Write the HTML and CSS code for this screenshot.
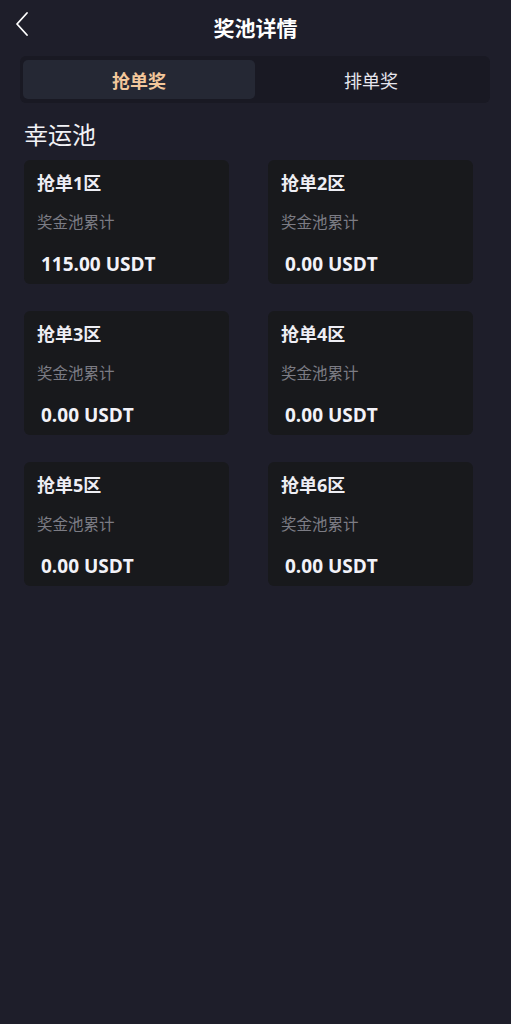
FILE: index.html
```html
<!DOCTYPE html>
<html lang="zh">
<head>
<meta charset="utf-8">
<title>奖池详情</title>
<link rel="stylesheet" href="styles.css">
</head>
<body>
<div class="page">
  <header class="topbar">
    <span class="back">
      <svg width="16" height="26" viewBox="0 0 16 26"><path d="M13 2 L3 13 L13 24" fill="none" stroke="#ffffff" stroke-width="1.8" stroke-linecap="round" stroke-linejoin="round"/></svg>
    </span>
    <h1 class="title">奖池详情</h1>
  </header>
  <div class="tabs">
    <div class="tab active">抢单奖</div>
    <div class="tab">排单奖</div>
  </div>
  <h2 class="section">幸运池</h2>
  <div class="grid">
    <div class="card"><div class="c-title">抢单1区</div><div class="c-label">奖金池累计</div><div class="c-amount">115.00 USDT</div></div>
    <div class="card"><div class="c-title">抢单2区</div><div class="c-label">奖金池累计</div><div class="c-amount">0.00 USDT</div></div>
    <div class="card"><div class="c-title">抢单3区</div><div class="c-label">奖金池累计</div><div class="c-amount">0.00 USDT</div></div>
    <div class="card"><div class="c-title">抢单4区</div><div class="c-label">奖金池累计</div><div class="c-amount">0.00 USDT</div></div>
    <div class="card"><div class="c-title">抢单5区</div><div class="c-label">奖金池累计</div><div class="c-amount">0.00 USDT</div></div>
    <div class="card"><div class="c-title">抢单6区</div><div class="c-label">奖金池累计</div><div class="c-amount">0.00 USDT</div></div>
  </div>
</div>
</body>
</html>
```
FILE: styles.css
```css
html, body {
  margin: 0;
  padding: 0;
  background: #1e1e2a;
}
body {
  font-family: "Open Sans", "Noto Sans CJK SC", sans-serif;
  color: #ffffff;
}
.page {
  width: 511px;
  min-height: 1024px;
  background: #1e1e2a;
}
.topbar {
  position: relative;
  height: 56px;
  display: flex;
  align-items: center;
  justify-content: center;
}
.back {
  position: absolute;
  left: 14px;
  top: 11px;
  display: flex;
}
.title {
  margin: 0;
  font-size: 21px;
  font-weight: 700;
  line-height: 26px;
}
.tabs {
  margin: 0 21px 0 20px;
  height: 47px;
  box-sizing: border-box;
  padding: 4px 3px;
  background: #191923;
  border-radius: 6px;
  display: flex;
}
.tab {
  flex: 1;
  display: flex;
  align-items: center;
  justify-content: center;
  font-size: 18px;
  color: #e6e6ee;
  border-radius: 5px;
}
.tab.active {
  background: #252834;
  color: #f3c79b;
  font-weight: 700;
}
.section {
  margin: 17px 0 0 24px;
  font-size: 24px;
  font-weight: 400;
  line-height: 30px;
  color: #f2f2f6;
}
.grid {
  margin: 10px 0 0 24px;
  display: grid;
  grid-template-columns: 205px 205px;
  column-gap: 39px;
  row-gap: 27px;
}
.card {
  height: 124px;
  box-sizing: border-box;
  background: #18191c;
  border-radius: 6px;
  padding: 11px 0 0 13px;
}
.c-title {
  font-size: 18px;
  font-weight: 700;
  line-height: 24px;
  color: #eeeef4;
}
.c-label {
  margin-top: 16px;
  font-size: 15.5px;
  line-height: 22px;
  color: #7c7c84;
}
.c-amount {
  margin-top: 19px;
  padding-left: 4px;
  font-size: 19px;
  font-weight: 700;
  line-height: 24px;
  color: #f2f2f8;
}
```
